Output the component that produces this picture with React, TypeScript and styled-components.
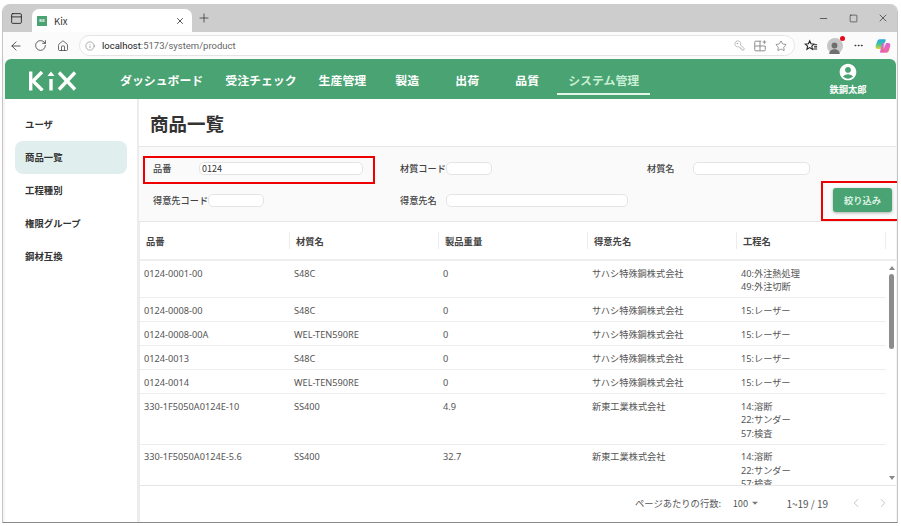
import React from "react";
import styled, { createGlobalStyle } from "styled-components";
import { ArrowLeft, RotateCw, Home, Info, KeyRound, Star, X, Plus, Minus, Square, PanelTop, ChevronLeft, ChevronRight, MoreHorizontal } from "lucide-react";
import { MdAccountCircle, MdArrowDropDown } from "react-icons/md";

const GREEN = "#4aa372";
const FONT = `"Noto Sans CJK JP", "Noto Sans", sans-serif`;
const COLUMNS = "150px repeat(4, 149px)";

const Global = createGlobalStyle`
  html, body { margin: 0; padding: 0; background: #fff; overflow: hidden; }
  * { box-sizing: border-box; }
  #root { width: 901px; height: 526px; overflow: hidden; font-family: ${FONT}; }
`;

const Desktop = styled.div`
  width: 901px;
  height: 526px;
  padding: 4px 3px 3px 2px;
  background: #fff;
`;
const Win = styled.div`
  height: 100%;
  display: flex;
  flex-direction: column;
  background: #f5f5f5;
  border-radius: 8px 8px 0 0;
  border-bottom: 1px solid #8a8a8a;
  border-left: 1px solid #c4c4c4;
  border-right: 1px solid #c4c4c4;
  overflow: hidden;
`;
const TabStrip = styled.div`
  height: 28px;
  flex: none;
  display: flex;
  align-items: flex-end;
  background: #cdcdcd;
`;
const TabToggle = styled.div`
  width: 26px;
  height: 28px;
  display: flex;
  align-items: center;
  justify-content: center;
  color: #222;
  margin-right: 3px;
`;
const Tab = styled.div`
  width: 160px;
  height: 23px;
  display: flex;
  align-items: center;
  gap: 7px;
  padding: 0 7px 0 5px;
  background: #fff;
  border-radius: 7px 7px 0 0;
  font-size: 9.5px;
  color: #333;
`;
const Favicon = styled.div`
  width: 10px;
  height: 10px;
  background: ${GREEN};
  color: #fff;
  font-size: 3.5px;
  font-weight: 700;
  display: flex;
  align-items: center;
  justify-content: center;
  letter-spacing: 0;
`;
const TabTitle = styled.span`
  flex: 1;
`;
const NewTab = styled.div`
  width: 24px;
  height: 28px;
  display: flex;
  align-items: center;
  justify-content: center;
  color: #333;
`;
const WinControls = styled.div`
  margin-left: auto;
  margin-right: -1px;
  height: 28px;
  display: flex;
  align-items: center;
`;
const WinButton = styled.div`
  width: 30px;
  display: flex;
  justify-content: center;
  color: #222;
`;
const Toolbar = styled.div`
  height: 27px;
  flex: none;
  background: #fbfbfb;
  display: flex;
  align-items: center;
  padding-left: 1px;
  color: #333;
`;
const ToolIcon = styled.div<{ $w: number }>`
  width: ${(p) => p.$w}px;
  display: flex;
  justify-content: center;
  align-items: center;
  flex: none;
  position: relative;
`;
const Address = styled.div`
  width: 716px;
  height: 21px;
  flex: none;
  margin-left: 5px;
  border: 1px solid #e4e4e4;
  border-radius: 11px;
  background: #fff;
  display: flex;
  align-items: center;
  padding: 0 3px 0 5px;
  font-family: Roboto, "Noto Sans", sans-serif;
  font-size: 9.5px;
  color: #666;
`;
const Host = styled.span`
  color: #222;
`;
const AddressText = styled.span`
  flex: 1;
  margin-left: 7px;
`;
const Avatar = styled.div`
  width: 16px;
  height: 16px;
  border-radius: 50%;
  background: #c6c6c6;
  display: flex;
  align-items: flex-end;
  justify-content: center;
  overflow: visible;
  position: relative;
  &::after {
    content: "";
    position: absolute;
    top: -2px;
    right: -2px;
    width: 5px;
    height: 5px;
    border-radius: 50%;
    background: #e8091b;
  }
`;
const App = styled.div`
  flex: 1;
  min-height: 0;
  margin: 0 1px 0 2px;
  background: #fff;
  display: flex;
  flex-direction: column;
`;
const Header = styled.header`
  height: 40px;
  flex: none;
  background: ${GREEN};
  border-radius: 6px 6px 0 0;
  display: flex;
  padding-left: 24px;
`;
const Logo = styled.svg`
  width: 48px;
  height: 20px;
  margin-top: 12px;
  flex: none;
`;
const Nav = styled.nav`
  display: flex;
  margin-left: 32px;
  height: 36px;
`;
const NavItem = styled.div<{ $active?: boolean }>`
  min-width: 60px;
  padding: 6px 11px 0;
  display: flex;
  align-items: center;
  justify-content: center;
  font-size: 11.9px;
  font-weight: 700;
  white-space: nowrap;
  color: ${(p) => (p.$active ? "#c8efd6" : "#fff")};
  border-bottom: ${(p) => (p.$active ? "2px solid #e4f5ea" : "2px solid transparent")};
`;
const User = styled.div`
  margin-left: auto;
  width: 60px;
  margin-right: 18px;
  display: flex;
  flex-direction: column;
  align-items: center;
  color: #fff;
  font-size: 9.3px;
  font-weight: 700;
  padding-top: 3px;
  line-height: 15px;
`;
const Body = styled.div`
  flex: 1;
  min-height: 0;
  display: flex;
`;
const Sidebar = styled.aside`
  width: 134px;
  flex: none;
  padding: 9px 10px 0;
  border-right: 2px solid #ececec;
  display: flex;
  flex-direction: column;
`;
const SideItem = styled.div<{ $active?: boolean }>`
  height: 32.8px;
  flex: none;
  display: flex;
  align-items: center;
  padding-left: 10px;
  font-size: 9.4px;
  font-weight: 700;
  border-radius: 8px;
  color: #333;
  background: ${(p) => (p.$active ? "#e0efed" : "transparent")};
`;
const Main = styled.main`
  flex: 1;
  min-width: 0;
  display: flex;
  flex-direction: column;
`;
const TitleBar = styled.div`
  height: 47px;
  flex: none;
  display: flex;
  align-items: center;
  padding-left: 11px;
  font-size: 18.5px;
  font-weight: 700;
  color: #333;
`;
const Filter = styled.section`
  flex: none;
  height: 76px;
  background: #fafafa;
  border-top: 1px solid #e6e6e6;
  border-bottom: 1px solid #e6e6e6;
  padding: 14px 0 0 14px;
  display: grid;
  grid-template-columns: 247px 247px 1fr;
  grid-template-rows: 14px 14px;
  row-gap: 18px;
`;
const Field = styled.div<{ $marked?: boolean }>`
  display: flex;
  align-items: center;
  position: relative;
  justify-self: start;
  ${(p) =>
    p.$marked &&
    `&::after {
      content: "";
      position: absolute;
      inset: -5px -12px -9px -10px;
      border: 2px solid #ee0000;
      pointer-events: none;
    }`}
`;
const Label = styled.label`
  min-width: 46px;
  font-size: 9.2px;
  font-weight: 500;
  color: #444;
  white-space: nowrap;
`;
const Input = styled.div<{ $w: number }>`
  width: ${(p) => p.$w}px;
  height: 13px;
  background: #fff;
  border: 1px solid #e4e4e4;
  border-radius: 5px;
  font-size: 9px;
  line-height: 11px;
  padding-left: 2px;
  color: #333;
`;
const ActionCell = styled.div`
  justify-self: end;
  align-self: center;
  margin-right: 4px;
  position: relative;
  &::after {
    content: "";
    position: absolute;
    inset: -7px -12px -9px -12px;
    border: 2px solid #ee0000;
    pointer-events: none;
  }
`;
const ApplyButton = styled.button`
  display: block;
  width: 59px;
  height: 24px;
  border: none;
  border-radius: 3px;
  background: ${GREEN};
  color: #d9f1e2;
  font-family: ${FONT};
  font-size: 9.3px;
  font-weight: 700;
  padding: 0;
  box-shadow: 0 1px 3px rgba(0, 0, 0, 0.3);
`;
const TableHead = styled.div`
  height: 39px;
  flex: none;
  display: grid;
  grid-template-columns: ${COLUMNS};
  align-items: center;
  border-bottom: 2px solid #eeeeee;
  border-left: 1px solid #ececec;
`;
const HeadCell = styled.div`
  height: 17px;
  display: flex;
  align-items: center;
  padding-left: 6px;
  border-right: 1px solid #ececec;
  font-size: 9.3px;
  font-weight: 700;
  color: #444;
`;
const TableBody = styled.div`
  flex: 1;
  min-height: 0;
  display: flex;
  overflow: hidden;
  border-left: 1px solid #ececec;
`;
const Rows = styled.div`
  width: 746px;
  flex: none;
  overflow: hidden;
`;
const Row = styled.div`
  display: grid;
  grid-template-columns: ${COLUMNS};
  min-height: 24px;
  border-bottom: 1px solid #ededed;
  padding: 5.5px 0 3.5px;
`;
const Cell = styled.div`
  padding-left: 4px;
  font-family: "Noto Sans", "Noto Sans CJK JP", sans-serif;
  font-size: 9.2px;
  line-height: 13.5px;
  color: #555;
  white-space: pre-line;
`;
const ScrollTrack = styled.div`
  width: 11px;
  flex: none;
  display: flex;
  flex-direction: column;
  align-items: center;
  padding-top: 5px;
  position: relative;
`;
const ScrollArrow = styled.div<{ $down?: boolean }>`
  width: 0;
  height: 0;
  border-left: 3px solid transparent;
  border-right: 3px solid transparent;
  ${(p) => (p.$down ? "border-top: 4px solid #8a8a8a;" : "border-bottom: 4px solid #8a8a8a;")}
  ${(p) => (p.$down ? "margin-top: auto; margin-bottom: 5px;" : "")}
`;
const ScrollThumb = styled.div`
  width: 5px;
  height: 75px;
  margin-top: 4px;
  border-radius: 3px;
  background: #8c8c8c;
`;
const Footer = styled.footer`
  height: 37px;
  flex: none;
  display: flex;
  align-items: center;
  border-top: 1px solid #e6e6e6;
  border-left: 1px solid #ececec;
  padding: 0 0 2px 495px;
  font-size: 9.3px;
  color: #555;
`;
const RowsLabel = styled.span`
  width: 98px;
  white-space: nowrap;
`;
const PageSize = styled.span`
  display: flex;
  align-items: center;
  width: 54px;
`;
const PageRange = styled.span`
  width: 56px;
  font-size: 10px;
  white-space: nowrap;
`;
const PageButton = styled.span`
  width: 27px;
  display: flex;
  justify-content: center;
  color: #b9b9b9;
`;

const Copilot = () => (
  <svg width="16" height="16" viewBox="0 0 16 16">
    <defs>
      <linearGradient id="cpa" x1="0" y1="0" x2="0" y2="1">
        <stop offset="0" stopColor="#2aa4f0" />
        <stop offset="0.55" stopColor="#45c98a" />
        <stop offset="1" stopColor="#f2d12a" />
      </linearGradient>
      <linearGradient id="cpb" x1="0" y1="0" x2="1" y2="1">
        <stop offset="0" stopColor="#a86ef0" />
        <stop offset="0.6" stopColor="#e864c8" />
        <stop offset="1" stopColor="#f0763c" />
      </linearGradient>
      <linearGradient id="cpc" x1="0" y1="0" x2="0" y2="1">
        <stop offset="0" stopColor="#f7e7ff" />
        <stop offset="1" stopColor="#f0532f" />
      </linearGradient>
    </defs>
    <path d="M5 1.2h4.5c1 0 1.4.5 1.1 1.4L8.4 9.5c-.4 1.2-1 1.6-2.2 1.6H3c-1.9 0-2.8-1.3-2.3-3l1.3-4.4C2.5 2 3.5 1.2 5 1.2z" fill="url(#cpa)" />
    <path d="M7.2 4.9h5.8c1.9 0 2.8 1.3 2.3 3L14 12.3c-.5 1.7-1.5 2.5-3 2.5H6.2c-1 0-1.4-.5-1.1-1.4l2.1-8.5z" fill="url(#cpb)" />
    <path d="M9 4.9h2.2L9 12c-.3 1-.9 1.5-1.8 1.5L9 4.9z" fill="url(#cpc)" />
  </svg>
);

const FavStar = () => (
  <svg width="14" height="14" viewBox="0 0 16 16" fill="none" stroke="#222" strokeWidth="1.2">
    <path d="M6.5 2l1.5 3.4 3.6.4-2.7 2.4.8 3.6-3.2-1.9-3.2 1.9.8-3.6L1.4 5.8 5 5.4z" />
    <path d="M12 6.5h3M11.5 9h3.5M10.5 11.5h4.5" />
  </svg>
);

const SplitIcon = () => (
  <svg width="14" height="14" viewBox="0 0 16 16" fill="none" stroke="#8a8a8a" strokeWidth="1.1">
    <path d="M9.5 2.5H3a1 1 0 0 0-1 1v9a1 1 0 0 0 1 1h10a1 1 0 0 0 1-1V8M2 8h12M8 2.5v11" />
    <path d="M13 1.5v4M11 3.5h4" />
  </svg>
);

const rows: [string, string, string, string, string][] = [
  ["0124-0001-00", "S48C", "0", "サハシ特殊鋼株式会社", "40:外注熱処理\n49:外注切断"],
  ["0124-0008-00", "S48C", "0", "サハシ特殊鋼株式会社", "15:レーザー"],
  ["0124-0008-00A", "WEL-TEN590RE", "0", "サハシ特殊鋼株式会社", "15:レーザー"],
  ["0124-0013", "S48C", "0", "サハシ特殊鋼株式会社", "15:レーザー"],
  ["0124-0014", "WEL-TEN590RE", "0", "サハシ特殊鋼株式会社", "15:レーザー"],
  ["330-1F5050A0124E-10", "SS400", "4.9", "新東工業株式会社", "14:溶断\n22:サンダー\n57:検査"],
  ["330-1F5050A0124E-5.6", "SS400", "32.7", "新東工業株式会社", "14:溶断\n22:サンダー\n57:検査"],
];

const navItems = ["ダッシュボード", "受注チェック", "生産管理", "製造", "出荷", "品質", "システム管理"];
const sideItems = ["ユーザ", "商品一覧", "工程種別", "権限グループ", "鋼材互換"];
const heads = ["品番", "材質名", "製品重量", "得意先名", "工程名"];

export default function AppPage() {
  return (
    <>
      <Global />
      <Desktop>
        <Win>
          <TabStrip>
            <TabToggle>
              <PanelTop size={13} strokeWidth={1.6} />
            </TabToggle>
            <Tab>
              <Favicon>KiX</Favicon>
              <TabTitle>Kix</TabTitle>
              <X size={10} strokeWidth={2} />
            </Tab>
            <NewTab>
              <Plus size={14} strokeWidth={1.3} />
            </NewTab>
            <WinControls>
              <WinButton>
                <Minus size={11} strokeWidth={1.4} />
              </WinButton>
              <WinButton>
                <Square size={9} strokeWidth={1.5} />
              </WinButton>
              <WinButton>
                <X size={12} strokeWidth={1.3} />
              </WinButton>
            </WinControls>
          </TabStrip>
          <Toolbar>
            <ToolIcon $w={24}>
              <ArrowLeft size={14} strokeWidth={1.4} />
            </ToolIcon>
            <ToolIcon $w={24}>
              <RotateCw size={13} strokeWidth={1.4} />
            </ToolIcon>
            <ToolIcon $w={22}>
              <Home size={12} strokeWidth={1.4} />
            </ToolIcon>
            <Address>
              <Info size={10} strokeWidth={1.4} color="#777" />
              <AddressText>
                <Host>localhost</Host>:5173/system/product
              </AddressText>
              <ToolIcon $w={20}>
                <KeyRound size={11} strokeWidth={1.2} color="#8a8a8a" style={{ transform: "scaleX(-1)" }} />
              </ToolIcon>
              <ToolIcon $w={22}>
                <SplitIcon />
              </ToolIcon>
              <ToolIcon $w={20}>
                <Star size={12} strokeWidth={1.2} color="#555" />
              </ToolIcon>
            </Address>
            <ToolIcon $w={31}>
              <FavStar />
            </ToolIcon>
            <ToolIcon $w={17}>
              <Avatar>
                <svg width="13" height="13" viewBox="0 0 16 16" fill="#6f6f6f">
                  <circle cx="8" cy="5.5" r="3.6" />
                  <path d="M1.5 16c0-4 3-6 6.5-6s6.5 2 6.5 6z" />
                </svg>
              </Avatar>
            </ToolIcon>
            <ToolIcon $w={31}>
              <MoreHorizontal size={11} strokeWidth={2} />
            </ToolIcon>
            <ToolIcon $w={18}>
              <Copilot />
            </ToolIcon>
          </Toolbar>
          <App>
            <Header>
              <Logo viewBox="0 0 48 20" aria-label="KiX">
                <g fill="none" stroke="#fff" strokeWidth="3.4">
                  <path d="M1.7 0.5v19" />
                  <path d="M13 1L4 10l9.5 9.5" />
                  <path d="M22 8v11.5" />
                  <path d="M30 1.5l16 17" />
                  <path d="M46 1.5l-16 17" />
                </g>
                <path d="M22 .5l3.5 4.5h-7z" fill="#fff" />
              </Logo>
              <Nav>
                {navItems.map((n) => (
                  <NavItem key={n} $active={n === "システム管理"}>
                    {n}
                  </NavItem>
                ))}
              </Nav>
              <User>
                <MdAccountCircle size={20} />
                鉄鋼太郎
              </User>
            </Header>
            <Body>
              <Sidebar>
                {sideItems.map((s) => (
                  <SideItem key={s} $active={s === "商品一覧"}>
                    {s}
                  </SideItem>
                ))}
              </Sidebar>
              <Main>
                <TitleBar>商品一覧</TitleBar>
                <Filter>
                  <Field $marked>
                    <Label>品番</Label>
                    <Input $w={164}>0124</Input>
                  </Field>
                  <Field>
                    <Label>材質コード</Label>
                    <Input $w={46} />
                  </Field>
                  <Field>
                    <Label>材質名</Label>
                    <Input $w={117} />
                  </Field>
                  <Field>
                    <Label>得意先コード</Label>
                    <Input $w={56} />
                  </Field>
                  <Field>
                    <Label>得意先名</Label>
                    <Input $w={182} />
                  </Field>
                  <ActionCell>
                    <ApplyButton>絞り込み</ApplyButton>
                  </ActionCell>
                </Filter>
                <TableHead>
                  {heads.map((h) => (
                    <HeadCell key={h}>{h}</HeadCell>
                  ))}
                </TableHead>
                <TableBody>
                  <Rows>
                    {rows.map((r, i) => (
                      <Row key={i}>
                        {r.map((c, j) => (
                          <Cell key={j}>{c}</Cell>
                        ))}
                      </Row>
                    ))}
                  </Rows>
                  <ScrollTrack>
                    <ScrollArrow />
                    <ScrollThumb />
                    <ScrollArrow $down />
                  </ScrollTrack>
                </TableBody>
                <Footer>
                  <RowsLabel>ページあたりの行数:</RowsLabel>
                  <PageSize>
                    100
                    <MdArrowDropDown size={14} color="#777" />
                  </PageSize>
                  <PageRange>1~19 / 19</PageRange>
                  <PageButton>
                    <ChevronLeft size={14} strokeWidth={1.4} />
                  </PageButton>
                  <PageButton>
                    <ChevronRight size={14} strokeWidth={1.4} />
                  </PageButton>
                </Footer>
              </Main>
            </Body>
          </App>
        </Win>
      </Desktop>
    </>
  );
}
